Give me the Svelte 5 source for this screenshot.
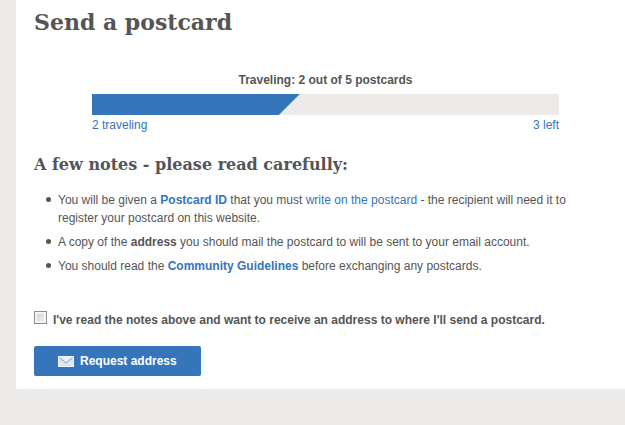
<script lang="ts">
  let traveling = $state(2);
  let allowed = $state(5);
  let accepted = $state(false);

  let percent = $derived((traveling / allowed) * 100);
</script>

<main class="page">
  <h1>Send a postcard</h1>

  <section class="traveling">
    <p class="traveling-title">Traveling: {traveling} out of {allowed} postcards</p>
    <div class="bar">
      <div class="bar-fill" style="width: {percent}%"></div>
    </div>
    <div class="bar-labels">
      <a href="#traveling">{traveling} traveling</a>
      <a href="#left">{allowed - traveling} left</a>
    </div>
  </section>

  <h2>A few notes - please read carefully:</h2>
  <ul>
    <li>
      You will be given a <a href="#id"><strong>Postcard ID</strong></a> that you must <a href="#write">write on the postcard</a> - the recipient will need it to register your postcard on this website.
    </li>
    <li>A copy of the <strong>address</strong> you should mail the postcard to will be sent to your email account.</li>
    <li>You should read the <a href="#guidelines"><strong>Community Guidelines</strong></a> before exchanging any postcards.</li>
  </ul>

  <form onsubmit={(e) => e.preventDefault()}>
    <label class="agree">
      <input type="checkbox" bind:checked={accepted} />
      <span>I've read the notes above and want to receive an address to where I'll send a postcard.</span>
    </label>
    <button type="submit">
      <svg width="16" height="11" viewBox="0 0 16 11" aria-hidden="true">
        <rect x="0.5" y="0.5" width="15" height="10" fill="#d3e3f8" stroke="#f4f8fd" />
        <path d="M1 10l5-4.5M15 10l-5-4.5" fill="none" stroke="#fff" />
        <path d="M1 1h14L8 7z" fill="#e9f1fc" />
        <path d="M1.5 1.5L8 7l6.5-5.5" fill="none" stroke="#7fa3d4" />
      </svg>
      Request address
    </button>
  </form>
</main>

<style>
  :global(body) {
    margin: 0;
    background: #ecebe9;
    color: #555;
    font-family: "Liberation Sans", Arial, sans-serif;
    font-size: 12px;
    line-height: 18px;
  }
  .page {
    margin: 0 0 36px 16px;
    padding: 6px 18px 13px;
    background: #fff;
  }
  h1,
  h2 {
    margin: 0;
    color: #555;
    font-family: Georgia, "DejaVu Serif", serif;
    font-weight: bold;
  }
  h1 {
    font-size: 22px;
    line-height: 32px;
  }
  h2 {
    font-size: 16px;
    line-height: 24px;
  }
  a {
    color: #3575b9;
    text-decoration: none;
  }
  .traveling {
    margin: 33px 48px 19px 58px;
  }
  .traveling-title {
    margin: 0 0 5px;
    font-weight: bold;
    text-align: center;
  }
  .bar {
    height: 21px;
    background: #ecebe9;
  }
  .bar-fill {
    height: 100%;
    padding-right: 21px;
    background: #3575b9;
    clip-path: polygon(0 0, 100% 0, calc(100% - 21px) 100%, 0 100%);
  }
  .bar-labels {
    display: flex;
    justify-content: space-between;
    padding-top: 1px;
  }
  ul {
    margin: 14px 0 36px;
    padding: 0 0 0 24px;
    list-style: none;
  }
  li {
    margin-bottom: 6px;
  }
  li::before {
    content: "";
    display: inline-block;
    width: 5px;
    height: 5px;
    margin: 0 7px 2px -12px;
    border-radius: 50%;
    background: #555;
  }
  .agree {
    display: flex;
    align-items: flex-start;
    gap: 6px;
    font-weight: bold;
  }
  .agree input {
    appearance: none;
    flex-shrink: 0;
    width: 13px;
    height: 13px;
    margin: 0;
    border: 1px solid #8e8f8f;
    background: linear-gradient(135deg, #cbcfd5, #f6f6f6);
    box-shadow: inset 0 0 0 2px #f4f4f4;
  }
  .agree input:checked {
    background: #3575b9;
  }
  button {
    display: flex;
    align-items: center;
    gap: 6px;
    height: 30px;
    margin-top: 17px;
    padding: 0 24px;
    border: 0;
    border-radius: 2px;
    background: #3575b9;
    color: #fff;
    font: bold 12px "Liberation Sans", Arial, sans-serif;
  }
</style>
